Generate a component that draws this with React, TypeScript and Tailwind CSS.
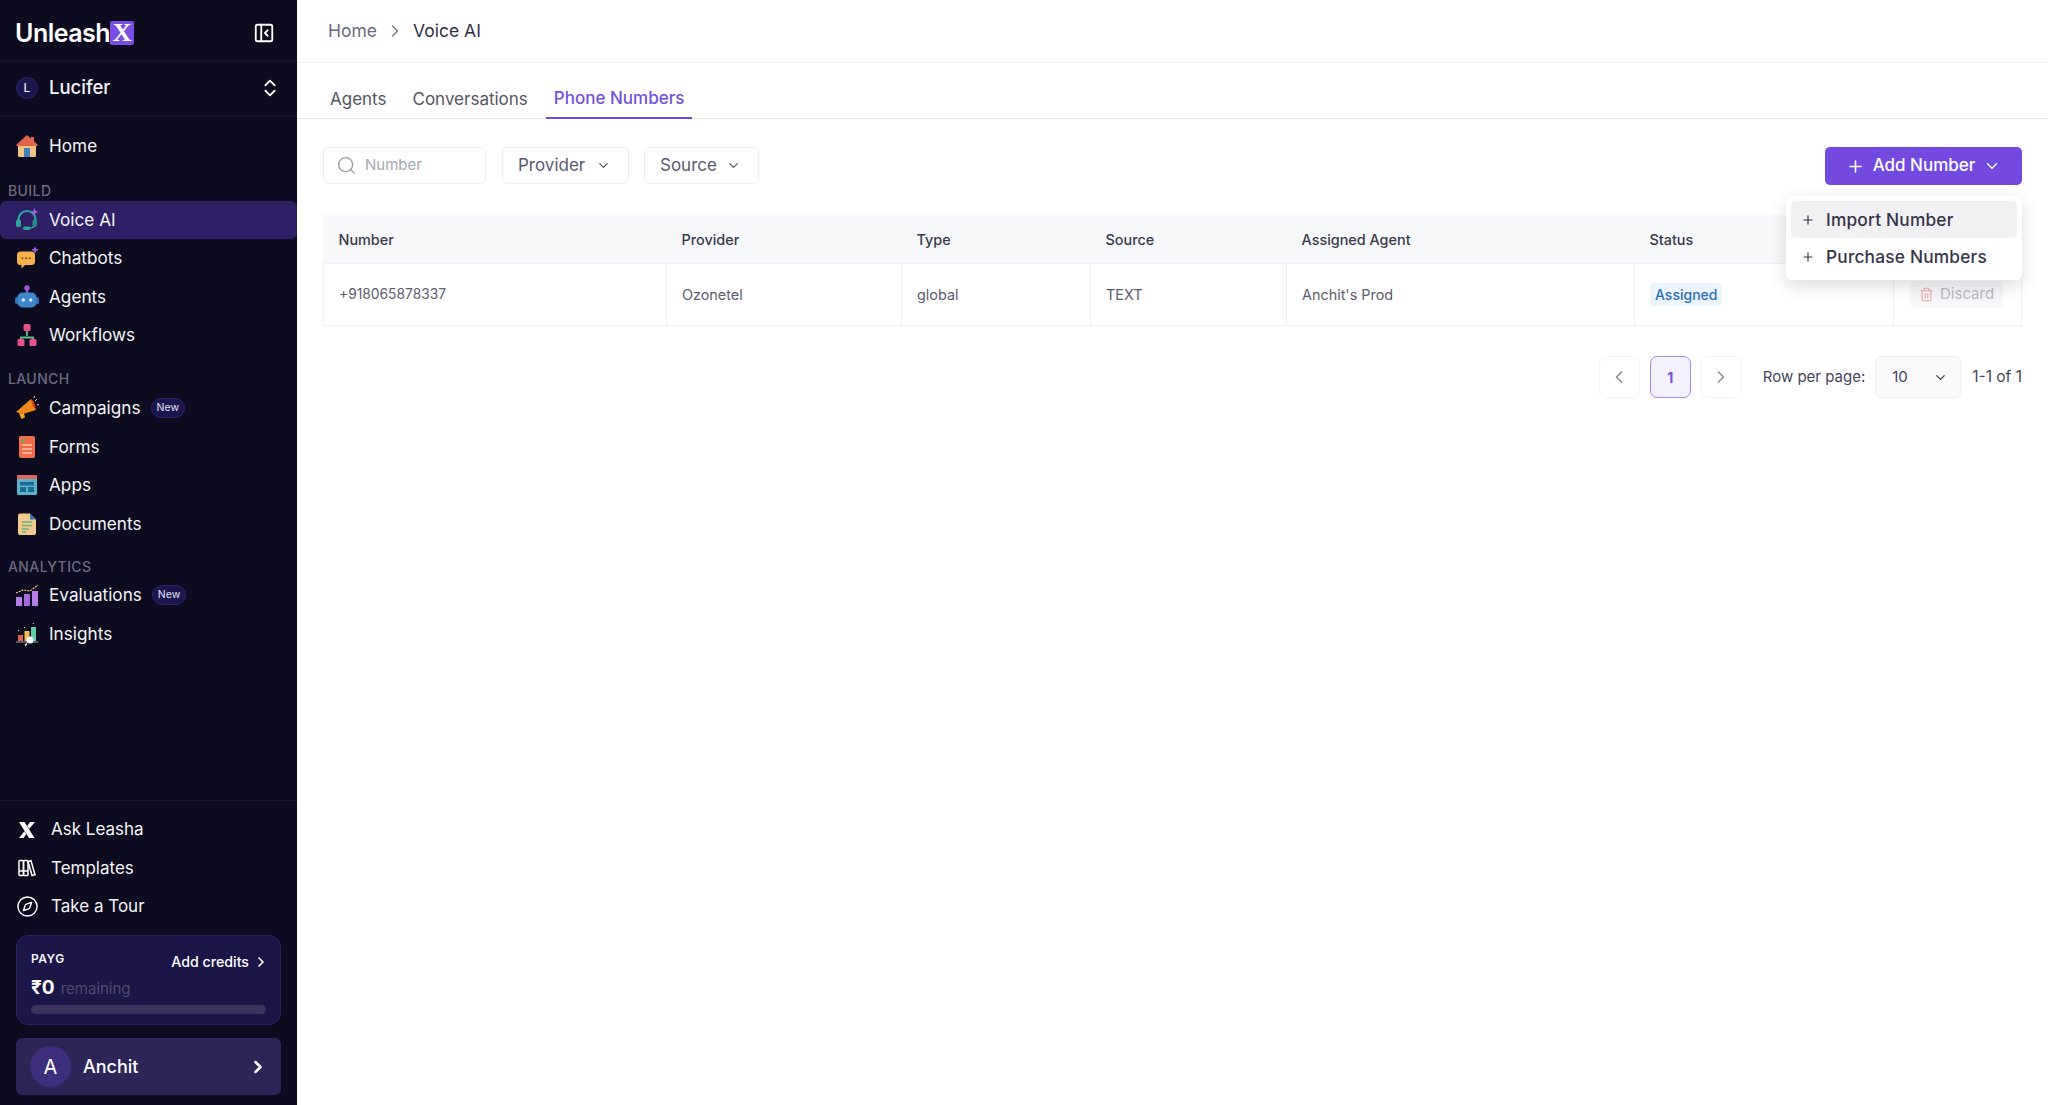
import { ChevronDown, ChevronLeft, ChevronRight, ChevronsUpDown, Compass, PanelLeftClose, Plus, Search, Trash2 } from "lucide-react";
import type { ReactNode } from "react";

const COLS = "grid grid-cols-[343px_235px_189px_196px_348px_259px_1fr]";

function HomeIcon() {
  return (
    <svg width="24" height="24" viewBox="0 0 24 24">
      <rect x="3" y="10" width="18" height="13" rx="1.5" fill="#f0c487" />
      <path d="M12 1 1.5 10.5c-.5.6-.2 1.5.6 1.5h19.8c.8 0 1.1-.9.6-1.5L19 7V3h-3v1.500L12 1z" fill="#dd6648" />
      <rect x="9" y="14" width="6" height="9" fill="#3f83b8" />
    </svg>
  );
}

function HeadsetIcon() {
  return (
    <svg width="24" height="24" viewBox="0 0 24 24" fill="none">
      <path d="M3.500 14v-2.500a8.500 8.500 0 0 1 17 0V14" stroke="#2ea69c" strokeWidth="2.200" />
      <path d="M20.500 15c0 3-2 4.500-5 5" stroke="#2ea69c" strokeWidth="1.600" />
      <rect x="1" y="11.500" width="5" height="7.500" rx="2" fill="#2ea69c" />
      <rect x="17.500" y="11.500" width="4.500" height="7.500" rx="2" fill="#1f8f87" />
      <rect x="8" y="18.500" width="7.500" height="3.500" rx="1.700" fill="#2ea69c" />
      <path d="M19.500 0l1.100 2.800 2.800 1.100-2.800 1.100-1.100 2.800-1.100-2.800-2.800-1.100 2.800-1.100z" fill="#a35fe0" />
    </svg>
  );
}

function ChatIcon() {
  return (
    <svg width="24" height="24" viewBox="0 0 24 24">
      <path d="M5.500 5.500h11A3.500 3.500 0 0 1 20 9v6.500a3.500 3.500 0 0 1-3.500 3.500H10l-3.500 3.500V19h-1A3.500 3.500 0 0 1 2 15.500V9a3.500 3.500 0 0 1 3.500-3.500z" fill="#f5b14c" />
      <circle cx="7.300" cy="12.300" r="1" fill="#7a4a12" />
      <circle cx="11" cy="12.300" r="1" fill="#7a4a12" />
      <circle cx="14.700" cy="12.300" r="1" fill="#7a4a12" />
      <path d="M20 0l1.100 2.700 2.700 1.100-2.700 1.100L20 7.600l-1.100-2.700-2.700-1.100 2.700-1.100z" fill="#a35fe0" />
    </svg>
  );
}

function RobotIcon() {
  return (
    <svg width="24" height="24" viewBox="0 0 24 24">
      <circle cx="12" cy="3" r="2.700" fill="#a855d8" />
      <rect x="11" y="5" width="2" height="3" fill="#a855d8" />
      <rect x="0" y="12" width="4" height="7" rx="1.500" fill="#2f6fb0" />
      <rect x="20" y="12" width="4" height="7" rx="1.500" fill="#2f6fb0" />
      <rect x="2.500" y="7.500" width="19" height="15" rx="5" fill="#3f86cc" />
      <circle cx="8.300" cy="15" r="1.800" fill="#dbeafe" />
      <circle cx="15.700" cy="15" r="1.800" fill="#dbeafe" />
    </svg>
  );
}

function FlowIcon() {
  return (
    <svg width="24" height="24" viewBox="0 0 24 24" fill="none">
      <path d="M12 8v5M6 18v-3.500h12V18" stroke="#5cc28a" strokeWidth="1.800" />
      <rect x="8.500" y="1" width="7" height="7" rx="1.500" fill="#ea4f8e" />
      <rect x="2.500" y="16" width="7" height="7" rx="1.500" fill="#ea4f8e" />
      <rect x="14.500" y="16" width="7" height="7" rx="1.500" fill="#ea4f8e" />
    </svg>
  );
}

function MegaphoneIcon() {
  return (
    <svg width="24" height="24" viewBox="0 0 24 24">
      <path d="M1 16 16 3l5 11-13 4z" fill="#f08a1c" />
      <path d="M16 3c2 .5 4.500 6 5 11-2.500-1.500-4.500-6-5-11z" fill="#d9480f" />
      <path d="M4 17l5 .5 1 4-3.500 1.500z" fill="#f5a524" />
      <path d="M20 5l2-2M22 9l2-.500M19 2l.5-2" stroke="#f8c9a0" strokeWidth="1" />
    </svg>
  );
}

function FormIcon() {
  return (
    <svg width="24" height="24" viewBox="0 0 24 24" fill="none">
      <rect x="4" y="1" width="16" height="22" rx="2" fill="#f26d4c" />
      <path d="M6 5l1.500 1.500L10 3.500" stroke="#4fb56f" strokeWidth="1.600" />
      <path d="M7 10h10M7 14h10M7 18h10" stroke="#fbc6a6" strokeWidth="1.400" />
    </svg>
  );
}

function AppsIcon() {
  return (
    <svg width="24" height="24" viewBox="0 0 24 24">
      <rect x="2" y="2" width="20" height="20" rx="1.500" fill="#58b4c9" />
      <path d="M3.500 2h17A1.500 1.500 0 0 1 22 3.500V6H2V3.500A1.500 1.500 0 0 1 3.500 2z" fill="#e2675c" />
      <rect x="5" y="9" width="14" height="3.500" fill="#1f6a94" />
      <rect x="5" y="14" width="6" height="5" fill="#1f6a94" />
      <rect x="13" y="14" width="6" height="5" fill="#1f6a94" />
    </svg>
  );
}

function DocIcon() {
  return (
    <svg width="24" height="24" viewBox="0 0 24 24" fill="none">
      <path d="M5 1.500h10l6 6V21a2 2 0 0 1-2 2H5a2 2 0 0 1-2-2V3.500a2 2 0 0 1 2-2z" fill="#f0c98e" />
      <path d="M15 1.500 21 7.500h-6z" fill="#3f6fb5" />
      <path d="M7 10h10M7 13.500h10M7 17h7M7 20h4" stroke="#6fb27a" strokeWidth="1.300" />
    </svg>
  );
}

function BarsIcon() {
  return (
    <svg width="24" height="24" viewBox="0 0 24 24" fill="none">
      <rect x="1" y="14" width="6" height="9" fill="#b67ee8" />
      <rect x="9" y="11" width="6" height="12" fill="#a566e0" />
      <rect x="17" y="8" width="6" height="15" fill="#b67ee8" />
      <path d="M1 10l7-3 7 1 8-6" stroke="#f2cf7c" strokeWidth="1.200" strokeDasharray="2 1" />
    </svg>
  );
}

function InsightIcon() {
  return (
    <svg width="24" height="24" viewBox="0 0 24 24" fill="none">
      <rect x="3" y="13" width="5" height="6" fill="#e5604d" />
      <rect x="9.500" y="9" width="5" height="10" fill="#f2c14e" />
      <rect x="16" y="5" width="5" height="14" fill="#5fd0a5" />
      <path d="M1 20h22" stroke="#9ca3af" strokeWidth="1" />
      <circle cx="15" cy="18" r="3.500" fill="#f8fafc" />
      <path d="M12 21.500l-2 2" stroke="#f8fafc" strokeWidth="1.500" />
      <path d="M3 8l1 1M9 5l1 1M18 1l.5 1" stroke="#f2cf7c" strokeWidth="1" />
    </svg>
  );
}

function LeashaIcon() {
  return (
    <svg width="18" height="18" viewBox="0 0 18 18" fill="#fff" className="ml-[1px]">
      <path d="M1 1h5.500l10 16H11z" />
      <path d="M12 1h5l-5.800 6.800-1.900-3zM6.300 10.300l1.900 3L5.500 17H1z" />
    </svg>
  );
}

function TemplatesIcon() {
  return (
    <svg width="18" height="18" viewBox="0 0 18 18" fill="none" stroke="#fff" strokeWidth="1.500" className="ml-[1px]">
      <rect x="1" y="1.500" width="4.500" height="15" rx=".8" />
      <rect x="5.500" y="1.500" width="4.500" height="15" rx=".8" />
      <path d="M10 2.500l3-.8 4 14-3 .8zM1 12h9" />
    </svg>
  );
}

function NavItem({ icon, label, active, badge }: { icon: ReactNode; label: string; active?: boolean; badge?: boolean }) {
  return (
    <div className={`flex h-[38.500px] items-center rounded-md pl-[15px] ${active ? "bg-[#2e1f66]" : ""}`}>
      <span className="flex w-[34px] shrink-0">{icon}</span>
      <span className="text-[17.200px] text-[#f4f4f8]">{label}</span>
      {badge && (
        <span className="ml-[10px] rounded-full border border-[#2e2468] bg-[#1c1650] px-[5px] py-[2px] text-[10.500px] leading-[14px] text-[#e4e2f2]">
          New
        </span>
      )}
    </div>
  );
}

function SectionLabel({ text, className }: { text: string; className: string }) {
  return <div className={`pl-[8px] text-[14px] font-medium leading-[18px] tracking-[0.4px] text-[#6b6a80] ${className}`}>{text}</div>;
}

function FooterLink({ icon, label }: { icon: ReactNode; label: string }) {
  return (
    <div className="flex h-[38.500px] items-center pl-[17px]">
      <span className="flex w-[34px] shrink-0">{icon}</span>
      <span className="text-[17px] text-[#f4f4f8]">{label}</span>
    </div>
  );
}

function Sidebar() {
  return (
    <aside className="flex h-[1105px] w-[297px] shrink-0 flex-col bg-[#0c0b1f]">
      <div className="flex h-[62px] shrink-0 items-center justify-between border-b border-[#17162c] pl-[15px] pr-[22px] pt-[5px]">
        <div className="flex items-center">
          <span className="text-[25px] font-semibold leading-none tracking-[-0.5px] text-white">Unleash</span>
          <span className="flex h-[24px] w-[24px] items-center justify-center rounded-[2px] bg-[#7a4ee0] font-['Liberation_Serif',serif] text-[26px] font-bold leading-none text-white">
            X
          </span>
        </div>
        <PanelLeftClose className="h-[22px] w-[22px] text-white" strokeWidth={2} />
      </div>
      <div className="flex h-[55px] shrink-0 items-center justify-between border-b border-[#17162c] pb-[3px] pl-[16px] pr-[16px]">
        <div className="flex items-center">
          <span className="flex h-[22px] w-[22px] items-center justify-center rounded-full border border-[#2e2468] bg-[#1c1650] text-[12px] text-white">
            L
          </span>
          <span className="ml-[11px] text-[18.500px] font-medium text-[#f4f4f8]">Lucifer</span>
        </div>
        <ChevronsUpDown className="h-[22px] w-[22px] text-white" strokeWidth={2} />
      </div>
      <div className="flex flex-1 flex-col pt-[10px]">
        <NavItem icon={<HomeIcon />} label="Home" />
        <SectionLabel text="BUILD" className="mt-[16px] mb-[1px]" />
        <NavItem icon={<HeadsetIcon />} label="Voice AI" active />
        <NavItem icon={<ChatIcon />} label="Chatbots" />
        <NavItem icon={<RobotIcon />} label="Agents" />
        <NavItem icon={<FlowIcon />} label="Workflows" />
        <SectionLabel text="LAUNCH" className="mt-[15px] mb-[1.500px]" />
        <NavItem icon={<MegaphoneIcon />} label="Campaigns" badge />
        <NavItem icon={<FormIcon />} label="Forms" />
        <NavItem icon={<AppsIcon />} label="Apps" />
        <NavItem icon={<DocIcon />} label="Documents" />
        <SectionLabel text="ANALYTICS" className="mt-[15px]" />
        <NavItem icon={<BarsIcon />} label="Evaluations" badge />
        <NavItem icon={<InsightIcon />} label="Insights" />
      </div>
      <div className="flex shrink-0 flex-col border-t border-[#17162c] pt-[10px] pb-[10px]">
        <FooterLink icon={<LeashaIcon />} label="Ask Leasha" />
        <FooterLink icon={<TemplatesIcon />} label="Templates" />
        <FooterLink icon={<Compass className="-ml-[1.500px] h-[23px] w-[23px] text-white" strokeWidth={1.500} />} label="Take a Tour" />
        <div className="mx-[16px] mt-[9px] h-[90px] rounded-[12px] border border-[#2b2367] bg-[#1c1648] px-[14px] pt-[16px]">
          <div className="flex items-start justify-between">
            <span className="text-[12px] font-semibold leading-[14px] tracking-[0.5px] text-[#f4f4f8]">PAYG</span>
            <span className="mt-[1px] flex items-center text-[14.200px] font-medium leading-[18px] text-white">
              Add credits
              <ChevronRight className="ml-[4px] -mr-[3px] h-[16px] w-[16px]" strokeWidth={2.500} />
            </span>
          </div>
          <div className="mt-[6px] flex items-baseline">
            <span className="text-[19px] font-bold leading-[22px] text-white">₹0</span>
            <span className="ml-[6px] text-[15px] text-[#4d4a70]">remaining</span>
          </div>
          <div className="mt-[4px] h-[9px] w-full rounded-full bg-[#39335e]" />
        </div>
        <div className="mx-[16px] mt-[13px] flex h-[57px] items-center justify-between rounded-[6px] bg-[#2d2558] pl-[14px] pr-[13px]">
          <div className="flex items-center">
            <span className="flex h-[41px] w-[41px] items-center justify-center rounded-full bg-[#3d2f7c] text-[20px] text-white">
              A
            </span>
            <span className="ml-[12px] text-[18px] font-medium text-white">Anchit</span>
          </div>
          <ChevronRight className="h-[20px] w-[20px] text-white" strokeWidth={3} />
        </div>
      </div>
    </aside>
  );
}

function FilterButton({ label, className }: { label: string; className: string }) {
  return (
    <div className={`flex h-[37px] items-center justify-between rounded-[5px] border border-[#eeeef2] pl-[15px] pr-[17px] text-[17px] text-[#5a5a6e] ${className}`}>
      {label}
      <ChevronDown className="h-[15px] w-[15px]" strokeWidth={2} />
    </div>
  );
}

function PageBox({ children, className }: { children: ReactNode; className: string }) {
  return (
    <div className={`flex h-[42px] w-[41px] items-center justify-center rounded-[7px] border ${className}`}>{children}</div>
  );
}

function Dropdown() {
  return (
    <div className="absolute right-0 top-[49px] z-10 w-[236px] rounded-[6px] bg-white p-[5px] text-[17.300px] font-medium tracking-[0.2px] text-[#34344a] shadow-[0_6px_18px_rgba(0,0,0,0.14)]">
      <div className="flex h-[37px] items-center rounded-[5px] bg-[#f1f1f4] pl-[10px]">
        <Plus className="mr-[11px] h-[14px] w-[14px]" strokeWidth={2} />
        Import Number
      </div>
      <div className="flex h-[37px] items-center rounded-[5px] pl-[10px]">
        <Plus className="mr-[11px] h-[14px] w-[14px]" strokeWidth={2} />
        Purchase Numbers
      </div>
    </div>
  );
}

function Main() {
  const headers = ["Number", "Provider", "Type", "Source", "Assigned Agent", "Status", ""];
  const cell = "flex items-center border-l border-[#f0f0f3] pl-[15px]";
  return (
    <main className="flex h-[1105px] min-w-0 flex-1 flex-col bg-white">
      <div className="flex h-[63px] shrink-0 items-center border-b border-[#f0f0f3] pl-[31px] text-[17.500px]">
        <span className="text-[#6b6b80]">Home</span>
        <ChevronRight className="mx-[8px] h-[20px] w-[20px] text-[#7c7c8c]" strokeWidth={1.800} />
        <span className="text-[#2f2f45]">Voice AI</span>
      </div>
      <div className="flex h-[56px] shrink-0 items-end border-b border-[#e7e7ec] pl-[25px] text-[17px]">
        <span className="px-[8px] pb-[6px] text-[#55555f]">Agents</span>
        <span className="ml-[10px] px-[8px] pb-[6px] text-[#55555f]">Conversations</span>
        <span className="ml-[10px] -mb-px border-b-[2px] border-[#6f48dc] px-[8px] pb-[6px] font-medium text-[#7550dc]">Phone Numbers</span>
      </div>
      <div className="flex flex-col px-[26px] pt-[28px]">
        <div className="relative flex h-[38px] items-start">
          <div className="flex h-[37px] w-[163px] items-center rounded-[5px] border border-[#eeeef2] pl-[12px] text-[15px] text-[#a6a6b2]">
            <Search className="mr-[8px] h-[21px] w-[21px] text-[#a0a0aa]" strokeWidth={1.600} />
            Number
          </div>
          <FilterButton label="Provider" className="ml-[16px] w-[127px]" />
          <FilterButton label="Source" className="ml-[15px] w-[115px]" />
          <div className="ml-auto flex h-[38px] w-[197px] items-center justify-center rounded-[5px] bg-[#7349e0] text-[17px] font-medium text-white">
            <Plus className="mr-[8px] h-[19px] w-[19px]" strokeWidth={2} />
            Add Number
            <ChevronDown className="ml-[8px] h-[18px] w-[18px]" strokeWidth={2} />
          </div>
          <Dropdown />
        </div>
        <div className="mt-[30px] text-[14.400px]">
          <div className={`${COLS} h-[49px] items-center border-b border-[#f0f0f3] bg-[#f7f8fa] pt-[1px] font-medium text-[#3a3a4c]`}>
            {headers.map((h) => (
              <div key={h || "action"} className="pl-[15.500px]">{h}</div>
            ))}
          </div>
          <div className={`${COLS} h-[62px] border-b border-[#f0f0f3] text-[#5d5d6e]`}>
            <div className={`${cell} text-[13.800px]`}>+918065878337</div>
            <div className={cell}>Ozonetel</div>
            <div className={cell}>global</div>
            <div className={cell}>TEXT</div>
            <div className={cell}>Anchit's Prod</div>
            <div className={cell}>
              <span className="rounded-[4px] bg-[#ebf4fb] px-[5px] py-[1px] text-[14px] font-medium text-[#2a6fb5]">Assigned</span>
            </div>
            <div className="flex items-center border-x border-[#f0f0f3] pl-[16px]">
              <span className="flex h-[27px] items-center rounded-[5px] bg-[#f7f7f9] px-[9px] text-[15px] text-[#b9b9c4]">
                <Trash2 className="mr-[6px] h-[15px] w-[15px] text-[#eeaaaa]" strokeWidth={1.800} />
                Discard
              </span>
            </div>
          </div>
        </div>
        <div className="mt-[30px] flex h-[42px] items-center justify-end">
          <PageBox className="border-[#f3f3f6]">
            <ChevronLeft className="h-[20px] w-[20px] text-[#8c8c98]" strokeWidth={2} />
          </PageBox>
          <PageBox className="ml-[10px] border-[#a48be8] bg-[#f4f0fd] text-[14px] font-bold text-[#7550dc]">1</PageBox>
          <PageBox className="ml-[10px] border-[#f3f3f6]">
            <ChevronRight className="h-[20px] w-[20px] text-[#8c8c98]" strokeWidth={2} />
          </PageBox>
          <span className="ml-[21px] text-[15px] text-[#44445a]">Row per page:</span>
          <div className="ml-[10px] flex h-[42px] w-[86px] items-center justify-between rounded-[6px] border border-[#eeeef2] bg-[#fafafb] pl-[16px] pr-[12px] text-[15px] text-[#44445a]">
            10
            <ChevronDown className="h-[15px] w-[15px]" strokeWidth={2.200} />
          </div>
          <span className="ml-[11px] text-[15.500px] text-[#44445a]">1-1 of 1</span>
        </div>
      </div>
    </main>
  );
}

export default function App() {
  return (
    <div className="flex h-[1105px] w-[2048px] overflow-hidden font-['Inter',sans-serif]">
      <Sidebar />
      <Main />
    </div>
  );
}
